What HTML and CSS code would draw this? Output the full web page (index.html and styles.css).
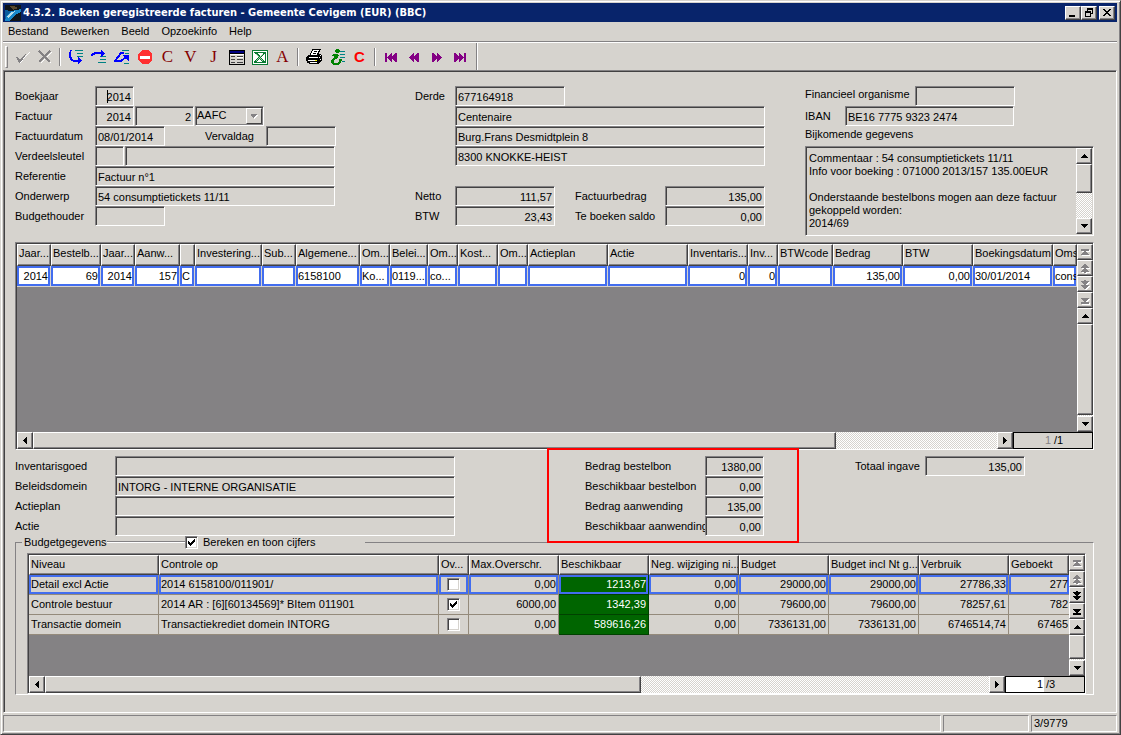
FILE: index.html
```html
<!DOCTYPE html>
<html lang="nl">
<head>
<meta charset="utf-8">
<title>4.3.2. Boeken geregistreerde facturen</title>
<link rel="stylesheet" href="styles.css">
</head>
<body>
<svg class="symbols" aria-hidden="true">
  <symbol id="up" viewBox="0 0 7 4"><path d="M3 0h1v1h1v1h1v1h1v1H0V3h1V2h1V1h1z"/></symbol>
  <symbol id="down" viewBox="0 0 7 4"><path d="M0 0h7v1H6v1H5v1H4v1H3V3H2V2H1V1H0z"/></symbol>
  <symbol id="left" viewBox="0 0 4 7"><path d="M3 0h1v7H3V6H2V5H1V4H0V3h1V2h1V1h1z"/></symbol>
  <symbol id="right" viewBox="0 0 4 7"><path d="M0 0h1v1h1v1h1v1h1v1H3v1H2v1H1v1H0z"/></symbol>
  <symbol id="first" viewBox="0 0 8 9"><path d="M0 1h8v2H0zM3 3h2v1h1v1h1v1h1v1H0V6h1V5h1V4h1z"/></symbol>
  <symbol id="last" viewBox="0 0 8 9"><path d="M0 6h8v2H0zM0 2h8v1H7v1H6v1H5v1H3V5H2V4H1V3H0z"/></symbol>
  <symbol id="pageup" viewBox="0 0 8 9"><path d="M3 0h2v1h1v1h1v1h1v1H5v1h1v1h1v1h1v1H5v1H3V8H0V7h1V6h1V5h1V4H0V3h1V2h1V1h1z"/></symbol>
  <symbol id="pagedown" viewBox="0 0 8 9"><path d="M3 0h2v1h3v1H7v1H6v1H5v1h3v1H7v1H6v1H5v1H3V8H2V7H1V6H0V5h3V4H2V3H1V2H0V1h3z"/></symbol>
  <symbol id="tick" viewBox="0 0 7 7"><path d="M0 2h1v1h1v1h1V3h1V2h1V1h1V0h1v3H6v1H5v1H4v1H3v1H2V6H1V5H0z"/></symbol>
</svg>
<div class="window">
  <header class="titlebar">
    <svg class="appicon" viewBox="0 0 16 16"><path fill="#101418" d="M0 0h16v16H0z"/><path fill="#0a5c9c" d="M0 5l6 1-2 4-4 6z"/><path fill="#1887c8" d="M0 16l2-6 5-4 9-2v3l-6 3-5 6z"/><path fill="#b8dce8" d="M2 11l3-3 5-2-4 4-3 3z"/><path fill="#57482e" d="M4 1h5l4 2-5 2z"/></svg>
    <h1>4.3.2. Boeken geregistreerde facturen - Gemeente Cevigem (EUR) (BBC)</h1>
    <div class="winbuttons">
      <button aria-label="Minimaliseren"><svg viewBox="0 0 12 10"><path d="M2 7h6v2H2z"/></svg></button>
      <button aria-label="Herstellen"><svg viewBox="0 0 12 10"><path fill-rule="evenodd" d="M4 0h6v6H8v3H2V3h2zM5 2v1h3v2h1V2zM3 5v3h4V5z"/></svg></button>
      <button class="close" aria-label="Sluiten"><svg viewBox="0 0 12 10"><path d="M2 1h2v1h1v1h2V2h1V1h2v1H9v1H8v1H7v1h1v1h1v1h1v1H8V7H7V6H5v1H4v1H2V7h1V6h1V5h1V4H4V3H3V2H2z"/></svg></button>
    </div>
  </header>
  <nav class="menu">
    <button>Bestand</button><button>Bewerken</button><button>Beeld</button><button>Opzoekinfo</button><button>Help</button>
  </nav>
  <div class="toolbar">
    <span class="grip"></span>
    <button aria-label="Bevestigen"><svg viewBox="0 0 16 16"><path fill="#fff" d="M3 9l3 5 3-3 7-8-8 7-2 2z"/><path fill="#848284" d="M2 8h2l2 3 2-3 6-6-5 8-3 4H5z"/></svg></button>
    <button aria-label="Annuleren"><svg viewBox="0 0 16 16"><path fill="none" stroke="#fff" d="M3 3l11 11M4 14L15 3"/><path fill="none" stroke="#848284" stroke-width="2" d="M2 2l11 11M2 13L13 2"/></svg></button>
    <span class="sep"></span>
    <button aria-label="Stap in"><svg viewBox="0 0 16 16"><path fill="#008284" d="M7 1h8v1H7zM9 4h6v1H9zM9 7h6v1H9z"/><path fill="#00f" d="M2 1h2v1H3v6h1v2h1v1h5V8h1v1h1v1h1v1h1v1h-1v1h-1v1h-1v1h-1v-2H5v-1H3v-1H2V9H1V3h1z"/></svg></button>
    <button aria-label="Stap over"><svg viewBox="0 0 16 16"><path fill="#008284" d="M9 7h6v1H9zM9 10h6v1H9zM7 13h8v1H7z"/><path fill="#00f" d="M0 6V5h1V4h2V3h7V1h1v1h1v1h1v1h1v1h-1v1h-1v1h-1v1h-1V5H4v1H2v1H0z"/></svg></button>
    <button aria-label="Stap uit"><svg viewBox="0 0 16 16"><path fill="#008284" d="M8 1h7v1H8zM11 4h4v1h-4zM10 14h5v1h-5z"/><path fill="none" stroke="#00f" stroke-width="2" d="M10 4H7L1 12h6l5-4"/><path fill="#00f" d="M9 6h6v6h-1v-1h-1v-1h-1V9h-1V8h-1V7H9z"/></svg></button>
    <button aria-label="Stop"><svg viewBox="0 0 16 16"><path fill="#ff3031" d="M5 1h6l4 4v6l-4 4H5l-4-4V5z"/><path fill="#fff" d="M3 7h10v3H3z"/></svg></button>
    <button class="letter">C</button>
    <button class="letter">V</button>
    <button class="letter">J</button>
    <button aria-label="Formulier"><svg viewBox="0 0 16 16"><path d="M0 1h16v15H0z"/><path fill="#000084" d="M1 2h14v2H1z"/><path fill="#d6d3ce" d="M1 5h14v10H1z"/><path fill="#fff" d="M1 5h14v1H1zM8 7h6v2H8z"/><path fill="#424142" d="M2 7h4v1H2zM2 10h4v1H2zM8 10h6v1H8zM2 13h4v1H2zM8 13h6v1H8zM8 7h6v1H8z"/></svg></button>
    <button aria-label="Excel"><svg viewBox="0 0 16 16"><path fill="#087a31" d="M0 1h16v15H0z"/><path fill="#fff" d="M1 2h14v13H1z"/><path fill="#087a31" d="M2 3h12v1H2zM13 3h1v11h-1zM2 13h12v1H2zM2 4h4l2 3 3-3h2l-4 4 4 5h-3l-3-3-2 3H2l4-5z"/><path fill="#a5d3ad" d="M4 5h1l6 7h-1zM10 5h1l-6 7H4z"/></svg></button>
    <button class="letter">A</button>
    <span class="sep"></span>
    <button aria-label="Afdrukken"><svg viewBox="0 0 16 16"><path d="M6 0h9v1h-1v2h-1v2h2v1h1v6h-1v1h-1v1h-1v1H3v-1H1v-2H0V8h1V7h1V6h2V4h1V2h1z"/><path fill="#fff" d="M7 1h6v1h-1v2h-1v2H5V4h1V2h1zM3 8h9v1H3zM2 11h9v1H2zM4 13h7v1H4zM14 6h1v1h-1zM13 8h1v1h-1zM14 10h1v1h-1z"/><path d="M8 2h3v1H8zM7 4h3v1H7z"/><path fill="#ffff00" d="M9 11h2v1H9z"/></svg></button>
    <button aria-label="Info"><svg viewBox="0 0 16 16"><path fill="#008284" d="M10 2h6v1h-6zM11 5h5v1h-5zM11 8h5v1h-5zM13 12h3v1h-3z"/><path fill="#008200" d="M7 0h3v1h1v2h-1v1H7V3H6V1h1zM4 5h5v1h1v1H9v2H8v1H6v1H5v3h4v-1h1v-3h3v2h-1v2h-1v1h-1v1H4v-1H3v-1H2v-3h1v-1h1V9h1V7H3V6h1z"/></svg></button>
    <button class="letter red">C</button>
    <span class="sep"></span>
    <button class="nav" aria-label="Eerste"><svg viewBox="0 0 16 16"><path d="M2 4h2v9H2zM9 4v3h1V6h1V5h1V4h2v9h-2v-1h-1v-1h-1v-1H9v3H8v-1H7v-1H6v-1H5V9H4V8h1V7h1V6h1V5h1V4z"/></svg></button>
    <button class="nav" aria-label="Vorige"><svg viewBox="0 0 16 16"><path d="M8 4v3h1V6h1V5h1V4h2v9h-2v-1h-1v-1H9v-1H8v3H7v-1H6v-1H5v-1H4V9H3V8h1V7h1V6h1V5h1V4z"/></svg></button>
    <button class="nav" aria-label="Volgende"><svg viewBox="0 0 16 16"><path d="M3 4h2v1h1v1h1v1h1V4h1v1h1v1h1v1h1v1h1v1h-1v1h-1v1h-1v1H9v1H8v-3H7v1H6v1H5v1H3z"/></svg></button>
    <button class="nav" aria-label="Laatste"><svg viewBox="0 0 16 16"><path d="M2 4h2v1h1v1h1v1h1V4h1v1h1v1h1v1h1v1h1V4h2v9h-2V9h-1v1h-1v1H9v1H8v1H7v-3H6v1H5v1H4v1H2z"/></svg></button>
    <span class="toolend"></span>
  </div>

  <main class="panel">
    <section class="invoice">
      <div class="col left">
        <div class="row"><label for="bj">Boekjaar</label><span class="caretbox"><input id="bj" class="w39 num" value="2014"><i class="caret"></i></span></div>
        <div class="row"><label for="fj">Factuur</label><input id="fj" class="w39 num" value="2014"><input aria-label="Factuurnummer" class="w59 num" value="2"><span class="combo"><select aria-label="Dagboek"><option>AAFC</option></select><svg viewBox="0 0 16 16"><path fill="#fff" d="M5 7h7v1h-1v1h-1v1H9v1H8v-1H7V9H6V8H5z"/><path fill="#848284" d="M4 6h7v1h-1v1H9v1H8v1H7V9H6V8H5V7H4z"/></svg></span></div>
        <div class="row"><label for="fd">Factuurdatum</label><input id="fd" class="w70" value="08/01/2014"><label class="due" for="vd">Vervaldag</label><input id="vd" class="w70"></div>
        <div class="row"><label for="vs">Verdeelsleutel</label><input id="vs" class="w29"><input aria-label="Omschrijving verdeelsleutel" class="w209"></div>
        <div class="row"><label for="rf">Referentie</label><input id="rf" class="w239" value="Factuur n°1"></div>
        <div class="row"><label for="ow">Onderwerp</label><input id="ow" class="w239" value="54 consumptietickets 11/11"></div>
        <div class="row"><label for="bh">Budgethouder</label><input id="bh" class="w70"></div>
      </div>
      <div class="col middle">
        <div class="row"><label for="de">Derde</label><input id="de" class="w110" value="677164918"></div>
        <div class="row indent"><input aria-label="Naam" class="w309" value="Centenaire"></div>
        <div class="row indent"><input aria-label="Adres" class="w309" value="Burg.Frans Desmidtplein 8"></div>
        <div class="row indent"><input aria-label="Gemeente" class="w309" value="8300 KNOKKE-HEIST"></div>
        <div class="row"></div>
        <div class="row"><label for="nt">Netto</label><input id="nt" class="w99 num" value="111,57"><label class="total" for="fb">Factuurbedrag</label><input id="fb" class="w99 num" value="135,00"></div>
        <div class="row"><label for="bt">BTW</label><input id="bt" class="w99 num" value="23,43"><label class="total" for="ts">Te boeken saldo</label><input id="ts" class="w99 num" value="0,00"></div>
      </div>
      <div class="col right">
        <div class="row"><label class="org" for="fo">Financieel organisme</label><input id="fo" class="w99"></div>
        <div class="row"><label for="ib">IBAN</label><input id="ib" class="w169" value="BE16 7775 9323 2474"></div>
        <label class="notelabel" for="bg">Bijkomende gegevens</label>
        <div class="note">
          <textarea id="bg">Commentaar : 54 consumptietickets 11/11
Info voor boeking : 071000 2013/157 135.00EUR

Onderstaande bestelbons mogen aan deze factuur gekoppeld worden:
2014/69</textarea>
          <div class="vscroll">
            <button aria-label="Omhoog"><svg class="v"><use href="#up"/></svg></button>
            <span class="thumb notethumb"></span><span class="track"></span>
            <button aria-label="Omlaag"><svg class="v"><use href="#down"/></svg></button>
          </div>
        </div>
      </div>
    </section>

    <section class="grid lines">
      <div class="gridbody">
        <table>
          <colgroup><col class="c34"><col class="c50"><col class="c34"><col class="c45"><col class="c15"><col class="c67"><col class="c34"><col class="c64"><col class="c30"><col class="c38"><col class="c30"><col class="c40"><col class="c30"><col class="c80"><col class="c80"><col class="c60"><col class="c30"><col class="c55"><col class="c70"><col class="c70"><col class="c80"><col></colgroup>
          <thead><tr><th>Jaar...</th><th>Bestelb...</th><th>Jaar...</th><th>Aanw...</th><th></th><th>Investering...</th><th>Sub...</th><th>Algemene...</th><th>Om...</th><th>Belei...</th><th>Om...</th><th>Kost...</th><th>Om...</th><th>Actieplan</th><th>Actie</th><th>Inventaris...</th><th>Inv...</th><th>BTWcode</th><th>Bedrag</th><th>BTW</th><th>Boekingsdatum</th><th>Oms</th></tr></thead>
          <tbody><tr class="selected"><td class="num">2014</td><td class="num">69</td><td class="num">2014</td><td class="num">157</td><td>C</td><td></td><td></td><td>6158100</td><td>Ko...</td><td>0119...</td><td>co...</td><td></td><td></td><td></td><td></td><td class="num">0</td><td class="num">0</td><td></td><td class="num">135,00</td><td class="num">0,00</td><td>30/01/2014</td><td>cons</td></tr></tbody>
        </table>
      </div>
      <div class="vscroll">
        <button class="off" aria-label="Eerste rij"><svg><use href="#first"/></svg></button>
        <button class="off" aria-label="Pagina omhoog"><svg><use href="#pageup"/></svg></button>
        <button class="off" aria-label="Pagina omlaag"><svg><use href="#pagedown"/></svg></button>
        <button class="off" aria-label="Laatste rij"><svg><use href="#last"/></svg></button>
        <button aria-label="Omhoog"><svg class="v"><use href="#up"/></svg></button>
        <span class="thumb fill"></span><span class="track sliver"></span>
        <button aria-label="Omlaag"><svg class="v"><use href="#down"/></svg></button>
      </div>
      <div class="gridfoot">
        <button aria-label="Links"><svg class="h"><use href="#left"/></svg></button>
        <div class="hbar"><span class="thumb wide"></span><span class="track"></span></div>
        <button aria-label="Rechts"><svg class="h"><use href="#right"/></svg></button>
        <div class="pager"><input class="off" aria-label="Rij" value="1"><span>/1</span></div>
      </div>
    </section>

    <section class="details">
      <div class="col domain">
        <div class="row"><label for="ig">Inventarisgoed</label><input id="ig" class="w339"></div>
        <div class="row"><label for="bd">Beleidsdomein</label><input id="bd" class="w339" value="INTORG - INTERNE ORGANISATIE"></div>
        <div class="row"><label for="ap">Actieplan</label><input id="ap" class="w339"></div>
        <div class="row"><label for="ac">Actie</label><input id="ac" class="w339"></div>
      </div>
      <div class="col orders">
        <div class="row"><label for="bb">Bedrag bestelbon</label><input id="bb" class="w59 num" value="1380,00"></div>
        <div class="row"><label for="sb">Beschikbaar bestelbon</label><input id="sb" class="w59 num" value="0,00"></div>
        <div class="row"><label for="ba">Bedrag aanwending</label><input id="ba" class="w59 num" value="135,00"></div>
        <div class="row"><label for="sa">Beschikbaar aanwending</label><input id="sa" class="w59 num" value="0,00"></div>
        <div class="highlight"></div>
      </div>
      <div class="col">
        <div class="row entered"><label for="ti">Totaal ingave</label><input id="ti" class="w99 num" value="135,00"></div>
      </div>
    </section>

    <fieldset class="budget">
      <legend><span>Budgetgegevens</span><i class="rule"></i><label><span class="check"><input type="checkbox" checked><svg><use href="#tick"/></svg></span>Bereken en toon cijfers</label></legend>
      <section class="grid">
        <div class="gridbody">
          <table>
            <colgroup><col class="c130"><col class="c280"><col class="c30"><col class="c90"><col class="c90"><col class="c90"><col class="c90"><col class="c90"><col class="c90"><col></colgroup>
            <thead><tr><th>Niveau</th><th>Controle op</th><th>Ov...</th><th>Max.Overschr.</th><th>Beschikbaar</th><th>Neg. wijziging ni...</th><th>Budget</th><th>Budget incl Nt g...</th><th>Verbruik</th><th>Geboekt</th></tr></thead>
            <tbody>
              <tr class="selected"><td>Detail excl Actie</td><td>2014 6158100/011901/</td><td class="mid"><span class="check"><input type="checkbox" aria-label="Overschrijding detail"></span></td><td class="num">0,00</td><td class="num green">1213,67</td><td class="num">0,00</td><td class="num">29000,00</td><td class="num">29000,00</td><td class="num">27786,33</td><td class="num cut">277</td></tr>
              <tr><td>Controle bestuur</td><td>2014 AR : [6][60134569]* BItem 011901</td><td class="mid"><span class="check"><input type="checkbox" checked aria-label="Overschrijding bestuur"><svg><use href="#tick"/></svg></span></td><td class="num">6000,00</td><td class="num green">1342,39</td><td class="num">0,00</td><td class="num">79600,00</td><td class="num">79600,00</td><td class="num">78257,61</td><td class="num cut">782</td></tr>
              <tr><td>Transactie domein</td><td>Transactiekrediet domein INTORG</td><td class="mid"><span class="check"><input type="checkbox" aria-label="Overschrijding domein"></span></td><td class="num">0,00</td><td class="num green">589616,26</td><td class="num">0,00</td><td class="num">7336131,00</td><td class="num">7336131,00</td><td class="num">6746514,74</td><td class="num cut">67465</td></tr>
            </tbody>
          </table>
        </div>
        <div class="vscroll">
          <button class="off" aria-label="Eerste rij"><svg><use href="#first"/></svg></button>
          <button class="off" aria-label="Pagina omhoog"><svg><use href="#pageup"/></svg></button>
          <button aria-label="Pagina omlaag"><svg><use href="#pagedown"/></svg></button>
          <button aria-label="Laatste rij"><svg><use href="#last"/></svg></button>
          <button aria-label="Omhoog"><svg class="v"><use href="#up"/></svg></button>
          <span class="thumb fill"></span><span class="track sliver"></span>
          <button aria-label="Omlaag"><svg class="v"><use href="#down"/></svg></button>
        </div>
        <div class="gridfoot">
          <button aria-label="Links"><svg class="h"><use href="#left"/></svg></button>
          <div class="hbar"><span class="thumb medium"></span><span class="track"></span></div>
          <button aria-label="Rechts"><svg class="h"><use href="#right"/></svg></button>
          <div class="pager"><input aria-label="Rij" value="1"><span>/3</span></div>
        </div>
      </section>
    </fieldset>
  </main>
  <footer class="status"><span></span><span></span><span>3/9779</span></footer>
</div>
</body>
</html>
```
FILE: styles.css
```css
:root {
  --face: #d6d3ce;
  --shade: #848284;
  --dark: #424142;
  --blue: #426def;
}
* { box-sizing: border-box; }
body {
  margin: 0;
  background: var(--face);
  color: #000;
  font: 11px/13px "Liberation Sans", Arial, sans-serif;
}
button, input, select, textarea { font: inherit; color: inherit; margin: 0; border-radius: 0; outline: 0; }
button { padding: 0; border: 0; background: none; }
svg { display: block; shape-rendering: crispEdges; }
.symbols { position: absolute; width: 0; height: 0; }

.window {
  display: flex;
  flex-direction: column;
  min-height: 100vh;
  padding: 2px 3px 2px 2px;
  border: 1px solid var(--face);
  border-right-color: var(--dark);
  border-bottom-color: var(--dark);
  box-shadow: inset 1px 1px #fff, inset -1px -1px var(--shade);
}

.titlebar { display: flex; align-items: center; height: 19px; padding: 1px 2px 0; background: #08246b; }
.appicon { width: 16px; height: 16px; }
.titlebar h1 { flex: 1; margin: 0 0 0 2px; color: #fff; font: bold 11px/16px "DejaVu Sans Condensed", "DejaVu Sans", sans-serif; white-space: nowrap; }
.winbuttons { display: flex; }
.winbuttons button, .vscroll button, .gridfoot > button, .thumb {
  background: var(--face);
  border: 1px solid;
  border-color: #fff var(--dark) var(--dark) #fff;
  box-shadow: inset -1px -1px var(--shade);
}
.winbuttons button { width: 16px; height: 14px; }
.winbuttons svg { width: 12px; height: 10px; margin: 1px; }
.winbuttons .close { margin-left: 2px; }

.menu { display: flex; gap: 12px; height: 20px; padding: 0 5px; border-bottom: 1px solid var(--shade); }
.menu button { line-height: 19px; }

.toolbar { display: flex; align-items: center; height: 28px; padding-left: 2px; border-top: 1px solid #fff; }
.toolbar button { display: flex; align-items: center; justify-content: center; width: 23px; height: 22px; }
.toolbar svg { width: 16px; height: 16px; }
.grip { width: 3px; height: 22px; margin-right: 2px; border: 1px solid; border-color: #fff var(--shade) var(--shade) #fff; }
.sep { width: 2px; height: 18px; margin: 0 3px; border-left: 1px solid var(--shade); border-right: 1px solid #fff; }
.toolend { align-self: stretch; width: 2px; margin-left: 5px; border-left: 1px solid var(--shade); border-right: 1px solid #fff; }
.toolbar .letter { color: #840000; font: 17px/20px "Liberation Serif", serif; }
.toolbar .red { color: #f00; font: bold 15px/20px "Liberation Sans", sans-serif; }
.nav svg { fill: #840084; }

.panel {
  flex: 1;
  display: flex;
  flex-direction: column;
  padding: 15px 22px 17px 11px;
  border: 1px solid;
  border-color: var(--shade) #fff #fff var(--shade);
  box-shadow: inset 1px 1px var(--dark);
}
.invoice { display: flex; margin-bottom: 6px; }
.row { display: flex; min-height: 20px; gap: 1px; }
.row label { line-height: 20px; white-space: nowrap; }
.row input {
  height: 20px;
  padding: 1px 2px 0 2px;
  border: 1px solid;
  border-color: var(--shade) #fff #fff var(--shade);
  background: var(--face);
  box-shadow: inset 1px 1px var(--dark);
}
input.num { text-align: right; }
.left { width: 400px; }
.left .row > label:first-child { width: 79px; }
.left .due { width: 99px; padding-left: 39px; }
.middle { width: 390px; }
.middle .row > label:first-child { width: 39px; }
.middle .indent { padding-left: 40px; }
.middle .total { width: 108px; padding-left: 19px; }
.right { flex: 1; }
.right .row label { width: 39px; }
.right .row .org { width: 109px; line-height: 16px; }
.notelabel { display: block; height: 20px; line-height: 16px; }
.w29 { width: 29px; } .w39 { width: 39px; } .w59 { width: 59px; } .w70 { width: 70px; }
.w99 { width: 100px; } .w110 { width: 110px; } .w169 { width: 169px; } .w209 { width: 210px; }
.w239 { width: 240px; } .w309 { width: 310px; } .w339 { width: 340px; }

.caretbox, .combo, .check { position: relative; display: inline-block; }
.caret { position: absolute; left: 12px; top: 4px; width: 1px; height: 13px; background: #000; }
.combo select {
  appearance: none;
  width: 69px;
  height: 20px;
  padding: 0 0 1px 1px;
  border: 1px solid;
  border-color: var(--shade) #fff #fff var(--shade);
  background: var(--face);
  box-shadow: inset 1px 1px var(--dark), inset -1px -1px var(--shade);
}
.combo svg {
  position: absolute; right: 2px; top: 2px; width: 16px; height: 16px;
  border: 1px solid; border-color: #fff var(--dark) var(--dark) #fff;
  pointer-events: none;
}

.note { display: flex; height: 90px; padding: 1px; border: 1px solid; border-color: var(--shade) #fff #fff var(--shade); box-shadow: inset 1px 1px var(--dark); }
.note textarea { flex: 1; min-width: 0; padding: 4px 2px 0; border: 0; background: none; resize: none; overflow: hidden; }
.vscroll { display: flex; flex-direction: column; width: 16px; }
.vscroll button, .gridfoot > button { display: flex; flex: none; align-items: center; justify-content: center; width: 16px; height: 16px; }
.vscroll svg { width: 8px; height: 9px; }
.vscroll svg.v { width: 7px; height: 4px; }
.gridfoot > button svg.h { width: 4px; height: 7px; }
.off svg { fill: var(--shade); filter: drop-shadow(1px 1px 0 #fff); }
.thumb { flex: none; }
.notethumb { height: 29px; }
.track { flex: 1; background: repeating-conic-gradient(#fff 0 25%, var(--face) 0 50%) 0 0 / 2px 2px; }
.thumb.fill { flex: 1; }
.track.sliver { flex: none; height: 1px; }

.grid {
  display: grid;
  grid-template: 1fr 17px / 1fr 16px;
  border: 1px solid;
  border-color: var(--shade) #fff #fff var(--shade);
  box-shadow: inset 1px 1px var(--dark);
  padding: 1px 0 0 1px;
}
.lines { flex: 1; min-height: 207px; }
.gridbody { min-width: 0; overflow: hidden; background: var(--shade); }
.gridfoot { grid-column: 1 / -1; display: flex; background: var(--face); }
.gridfoot > button { height: 17px; }
.hbar { flex: 1; display: flex; }
.wide { width: 83.3%; }
.medium { width: 63.1%; }
.pager { display: flex; width: 80px; border: 1px solid #000; line-height: 15px; }
.pager input { width: 38px; padding: 0 1px; border: 0; background: #fff; text-align: right; }
.pager .off { width: 38px; background: none; color: var(--shade); }
.pager span { padding-left: 2px; }

table { width: 100%; table-layout: fixed; border-spacing: 0; }
th, td { padding: 0 2px; overflow: hidden; white-space: nowrap; font-weight: normal; }
th {
  height: 20px;
  padding: 0 1px 1px;
  text-align: left;
  background: var(--face);
  border: 1px solid;
  border-color: #fff var(--dark) var(--dark) #fff;
  box-shadow: inset -1px -1px var(--shade);
}
td { height: 20px; background: var(--face); border: 0 solid #948a7b; border-width: 0 1px 1px 0; }
.lines th { height: 22px; padding-bottom: 3px; }
.lines td { height: 21px; background: #fff; border-color: var(--face); }
td.num { text-align: right; }
td.mid { text-align: center; line-height: 0; }
.selected td { box-shadow: inset 0 0 0 2px var(--blue); }
td.green { background: #006500; color: #fff; border-color: #004100; }
td.cut { padding-right: 1px; border-right: 0; }
.c15 { width: 15px; } .c30 { width: 30px; } .c34 { width: 34px; } .c38 { width: 38px; } .c40 { width: 40px; }
.c45 { width: 45px; } .c50 { width: 50px; } .c55 { width: 55px; } .c60 { width: 60px; } .c64 { width: 64px; }
.c67 { width: 67px; } .c70 { width: 70px; } .c80 { width: 80px; } .c90 { width: 90px; } .c130 { width: 130px; } .c280 { width: 280px; }

.details { display: flex; padding-top: 6px; }
.domain { width: 570px; }
.domain .row label { width: 99px; }
.orders { position: relative; width: 270px; }
.orders .row label { width: 119px; }
.highlight { position: absolute; left: -38px; top: -8px; width: 252px; height: 95px; border: 2px solid #f00; pointer-events: none; }
.entered label { width: 69px; }

.budget {
  min-width: 0;
  margin: -2px 0 0;
  padding: 3px 7px 0 11px;
  border: 1px solid;
  border-color: var(--shade) #fff #fff var(--shade);
}
.budget legend { display: flex; align-items: center; width: 343px; height: 16px; margin-left: -5px; padding: 0 0 0 2px; }
.rule { flex: none; width: 78px; height: 2px; border-top: 1px solid var(--shade); border-bottom: 1px solid #fff; }
.budget legend > span { width: 83px; }
.budget legend label { display: flex; align-items: center; gap: 5px; }
.budget .grid { height: 141px; }
.check { width: 13px; height: 13px; }
.check input {
  appearance: none; display: block; width: 13px; height: 13px; background: #fff;
  border: 1px solid; border-color: var(--shade) #fff #fff var(--shade);
  box-shadow: inset 1px 1px var(--dark), inset -1px -1px var(--face);
}
.check svg { position: absolute; left: 3px; top: 3px; width: 7px; height: 7px; pointer-events: none; }

.status { display: grid; grid-template-columns: 1fr 86px 86px; gap: 2px; padding-top: 2px; }
.status span { height: 17px; padding-left: 2px; border: 1px solid; border-color: var(--shade) #fff #fff var(--shade); line-height: 15px; }
```
